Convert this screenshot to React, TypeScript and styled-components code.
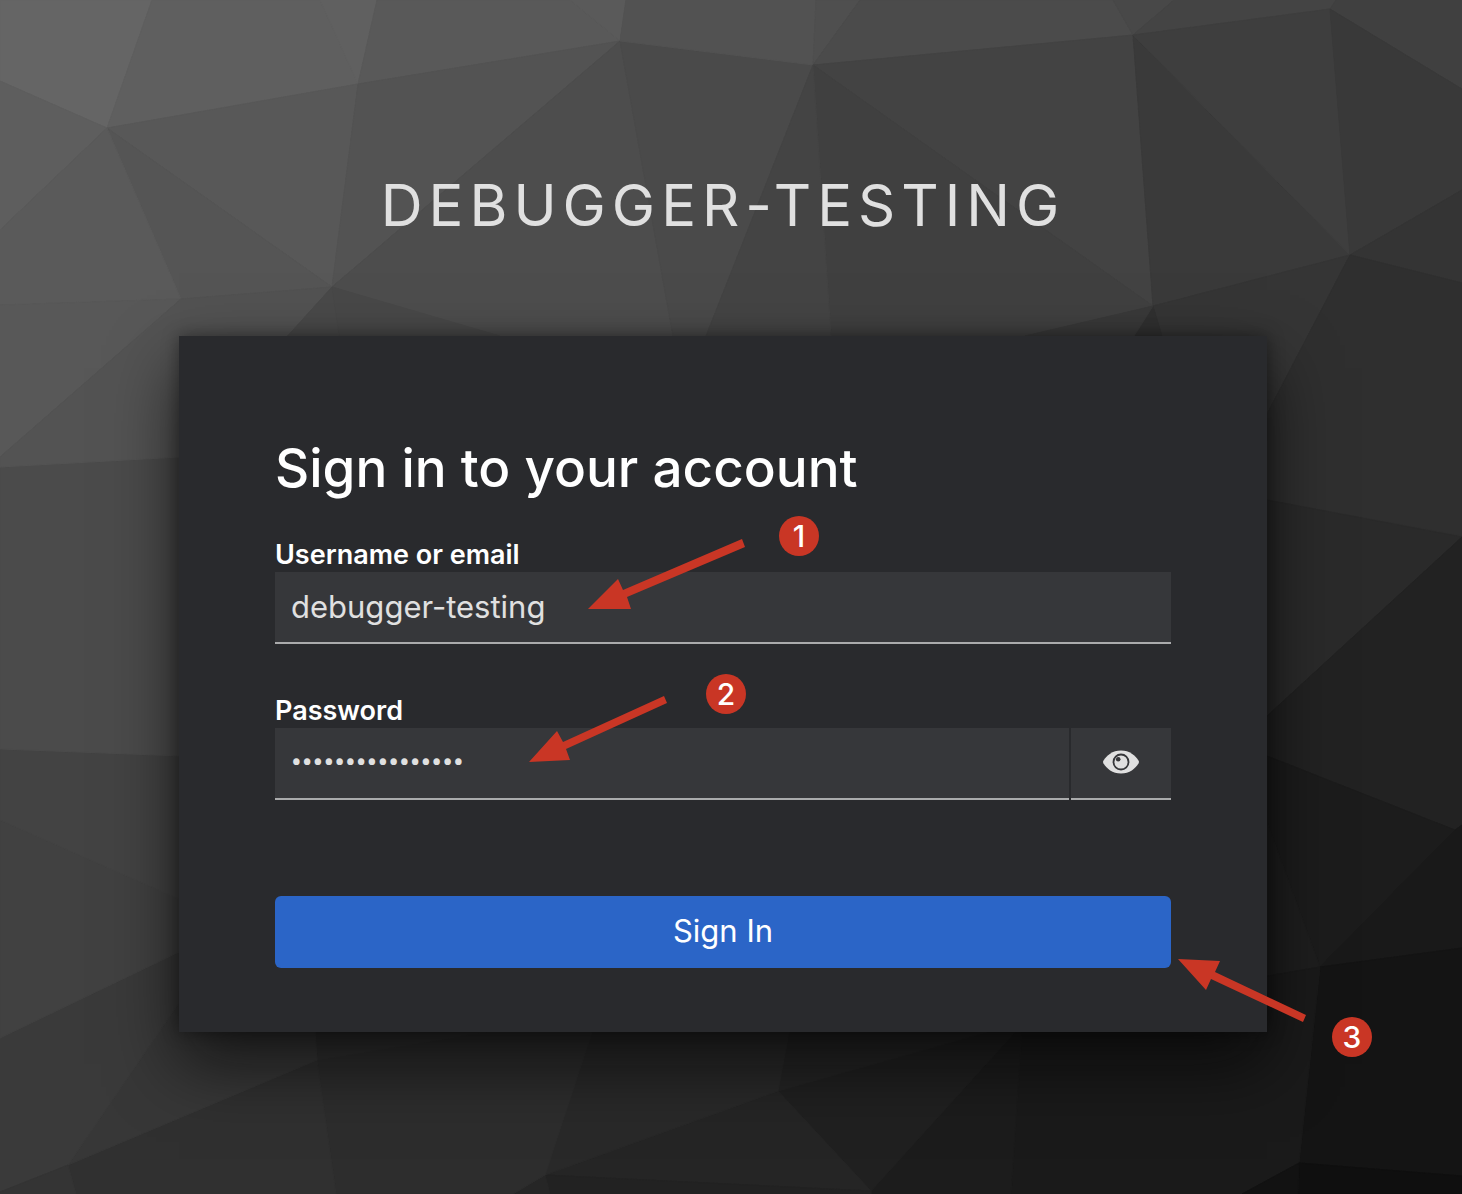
import React, { useState } from "react";
import styled, { createGlobalStyle } from "styled-components";

const GlobalStyle = createGlobalStyle`
  *, *::before, *::after { box-sizing: border-box; }
  body {
    margin: 0;
    background: #2d2d2d;
    font-family: Inter, "Liberation Sans", sans-serif;
  }
`;

/* Low-poly backdrop: fill colour and corner points of each facet */
const facets: [string, string][] = [
  ["#656565", "0,0 152,0 107,128 0,81"],
  ["#5e5e5e", "0,81 107,128 0,230"],
  ["#5f5f5f", "152,0 320,0 358,84 107,128"],
  ["#606060", "320,0 377,0 358,84"],
  ["#585858", "107,128 358,84 332,287"],
  ["#555555", "107,128 332,287 181,299"],
  ["#5a5a5a", "0,230 107,128 181,299 0,305"],
  ["#595959", "377,0 570,0 620,41 358,84"],
  ["#5a5a5a", "570,0 626,0 620,41"],
  ["#535353", "358,84 620,41 332,287"],
  ["#4d4d4d", "620,41 673,336 673,400 332,287"],
  ["#4a4a4a", "620,41 813,65 706,336 690,400 673,336"],
  ["#525252", "626,0 816,0 813,65 620,41"],
  ["#4f4f4f", "816,0 860,0 813,65"],
  ["#4b4b4b", "860,0 1113,0 1133,35 813,65"],
  ["#484848", "1113,0 1174,0 1133,35"],
  ["#444444", "1174,0 1336,0 1330,9 1133,35"],
  ["#434343", "813,65 1133,35 1153,306"],
  ["#404040", "813,65 1153,306 1025,336 831,336"],
  ["#444444", "813,65 831,336 706,336"],
  ["#3a3a3a", "1133,35 1350,255 1153,306"],
  ["#3e3e3e", "1133,35 1330,9 1350,255"],
  ["#404040", "1336,0 1462,0 1462,89 1330,9"],
  ["#393939", "1330,9 1462,89 1462,190 1350,255"],
  ["#343434", "1350,255 1462,190 1462,283"],
  ["#353535", "1153,306 1350,255 1267,414 1162,414 1162,336"],
  ["#303030", "1153,306 1162,336 1134,336"],
  ["#393939", "1153,306 1134,336 1025,336"],
  ["#2f2f2f", "1350,255 1462,283 1462,536 1267,500 1267,414"],
  ["#2a2a2a", "1267,500 1462,537 1267,716"],
  ["#222222", "1267,716 1462,537 1462,825 1455,830 1267,756"],
  ["#1c1c1c", "1267,756 1455,830 1320,967 1267,822"],
  ["#1e1e1e", "1267,822 1320,967 1267,976"],
  ["#191919", "1455,830 1462,825 1462,948 1320,967"],
  ["#141414", "1320,967 1462,948 1462,1176 1299,1163"],
  ["#1a1a1a", "1267,976 1320,967 1299,1163 1242,1194 1011,1194 1024,976"],
  ["#0f0f0f", "1299,1163 1462,1176 1462,1194 1298,1194"],
  ["#121212", "1299,1163 1298,1194 1242,1194"],
  ["#1c1c1c", "871,1191 1015,1032 1024,1000 1011,1194 871,1194"],
  ["#202020", "778,1091 987,1032 1024,1000 1015,1032 871,1191"],
  ["#252525", "778,1091 871,1191 545,1175"],
  ["#222222", "545,1175 871,1191 871,1194 550,1194"],
  ["#242424", "789,1000 1024,1000 987,1032 778,1091"],
  ["#292929", "592,1032 598,1000 789,1000 789,1032 778,1091 545,1175"],
  ["#262626", "545,1175 550,1194 513,1194"],
  ["#2d2d2d", "317,1060 485,1032 598,1000 592,1032 545,1175 513,1194 336,1194"],
  ["#303030", "313,1000 598,1000 485,1032 317,1060"],
  ["#303030", "68,1165 317,1060 336,1194 76,1194"],
  ["#373737", "181,1000 313,1000 317,1060 68,1165"],
  ["#3a3a3a", "0,1038 181,951 181,1000 68,1165 0,1192"],
  ["#343434", "0,1192 68,1165 76,1194 0,1194"],
  ["#414141", "0,820 181,900 181,951 0,1038"],
  ["#434343", "0,749 181,756 181,900 0,820"],
  ["#4b4b4b", "0,467 181,457 181,756 0,749"],
  ["#585858", "0,305 181,299 0,457"],
  ["#535353", "0,457 181,299 181,457 0,467"],
  ["#525252", "181,299 332,287 284,340 181,340"],
  ["#494949", "332,287 340,340 284,340"],
  ["#484848", "332,287 500,336 500,340 340,340"],
];

const arrows = [
  "409,273 439,243 444,254 563,203 566,211 448,261 452,273",
  "350,426 378,395 384,406 485,360 488,367 387,413 391,424",
  "999,623 1041,625 1036,636 1127,679 1124,686 1032,643 1027,654",
];

const Page = styled.div`
  position: relative;
  isolation: isolate;
  min-height: 100vh;
  padding: 160px 195px 162px 179px;
  overflow: hidden;
`;

const Backdrop = styled.svg`
  position: absolute;
  inset: 0;
  z-index: -1;
  width: 100%;
  height: 100%;
`;

const Realm = styled.header`
  height: 176px;
  padding-top: 8px;
  color: #e0e0e0;
  font-size: 58px;
  font-weight: 400;
  line-height: 74px;
  letter-spacing: 6px;
  text-align: center;
  text-transform: uppercase;
  white-space: nowrap;
`;

const Card = styled.main`
  position: relative;
  max-width: 1088px;
  margin: 0 auto;
  padding: 96px 96px 64px;
  background: #292a2d;
  box-shadow: 0 32px 64px rgba(3, 3, 3, 0.64), 0 0 16px rgba(3, 3, 3, 0.4);
`;

const Title = styled.h1`
  margin: 0 0 34px;
  color: #fff;
  font-size: 53px;
  font-weight: 500;
  line-height: 72px;
  white-space: nowrap;
`;

const Field = styled.div`
  margin-bottom: 50px;
`;

const Label = styled.label`
  display: block;
  color: #fff;
  font-size: 27px;
  font-weight: 600;
  line-height: 34px;
`;

const InputRow = styled.div`
  display: flex;
  gap: 2px;
`;

const TextInput = styled.input`
  flex: 1;
  min-width: 0;
  height: 72px;
  padding: 0 16px 2px;
  border: 0;
  border-bottom: 2px solid #aaabac;
  border-radius: 0;
  outline: none;
  background: #36373a;
  color: #e0e0e0;
  font-family: ${(p) => (p.type === "password" ? "Roboto, sans-serif" : "inherit")};
  font-size: ${(p) => (p.type === "password" ? "32px" : "31px")};
`;

const RevealButton = styled.button`
  display: flex;
  align-items: center;
  justify-content: center;
  width: 100px;
  height: 72px;
  padding: 0 0 2px;
  border: 0;
  border-bottom: 2px solid #aaabac;
  border-radius: 0;
  background: #36373a;
  color: #e0e0e0;
  cursor: pointer;
`;

const SubmitButton = styled.button`
  display: block;
  width: 100%;
  height: 72px;
  margin-top: 96px;
  padding: 0 0 4px;
  border: 0;
  border-radius: 6px;
  background: #2b65c7;
  color: #fff;
  font-family: inherit;
  font-size: 31px;
  cursor: pointer;
`;

const Arrows = styled.svg`
  position: absolute;
  top: 0;
  left: 0;
  width: 1088px;
  height: 696px;
  overflow: visible;
  fill: #c93625;
  pointer-events: none;
`;

const Step = styled.span<{ $x: number; $y: number }>`
  position: absolute;
  left: ${(p) => p.$x}px;
  top: ${(p) => p.$y}px;
  display: flex;
  align-items: center;
  justify-content: center;
  width: 40px;
  height: 40px;
  border-radius: 50%;
  background: #c93625;
  color: #fff;
  font-size: 30px;
  font-weight: 500;
  line-height: 40px;
`;

function EyeIcon() {
  return (
    <svg width="36" height="24" viewBox="0 0 36 24" aria-hidden="true">
      <path
        fill="currentColor"
        d="M18 .5C26.500 .5 32.500 5.500 35.600 10.800a2.400 2.400 0 0 1 0 2.400C32.500 18.500 26.500 23.500 18 23.500S3.500 18.500 .4 13.200a2.400 2.400 0 0 1 0-2.400C3.500 5.500 9.500 .5 18 .5Z"
      />
      <circle cx="18" cy="12" r="7.500" fill="none" stroke="#36373a" strokeWidth="1.800" />
      <circle cx="15.200" cy="9.200" r="2.300" fill="#36373a" />
    </svg>
  );
}

export default function App() {
  const [visible, setVisible] = useState(false);

  return (
    <>
      <GlobalStyle />
      <Page>
        <Backdrop viewBox="0 0 1462 1194" preserveAspectRatio="xMidYMid slice" aria-hidden="true">
          {facets.map(([fill, points], i) => (
            <polygon key={i} points={points} fill={fill} stroke={fill} strokeWidth="1" />
          ))}
        </Backdrop>
        <Realm>debugger-testing</Realm>
        <Card>
          <Title>Sign in to your account</Title>
          <form onSubmit={(e) => e.preventDefault()}>
            <Field>
              <Label htmlFor="username">Username or email</Label>
              <InputRow>
                <TextInput id="username" type="text" defaultValue="debugger-testing" />
              </InputRow>
            </Field>
            <Label htmlFor="password">Password</Label>
            <InputRow>
              <TextInput
                id="password"
                type={visible ? "text" : "password"}
                defaultValue="debugger-testing"
              />
              <RevealButton
                type="button"
                aria-label={visible ? "Hide password" : "Show password"}
                onClick={() => setVisible(!visible)}
              >
                <EyeIcon />
              </RevealButton>
            </InputRow>
            <SubmitButton type="submit">Sign In</SubmitButton>
          </form>
          <Arrows viewBox="0 0 1088 696" aria-hidden="true">
            {arrows.map((points) => (
              <polygon key={points} points={points} />
            ))}
          </Arrows>
          <Step $x={600} $y={180}>1</Step>
          <Step $x={527} $y={338}>2</Step>
          <Step $x={1153} $y={681}>3</Step>
        </Card>
      </Page>
    </>
  );
}
